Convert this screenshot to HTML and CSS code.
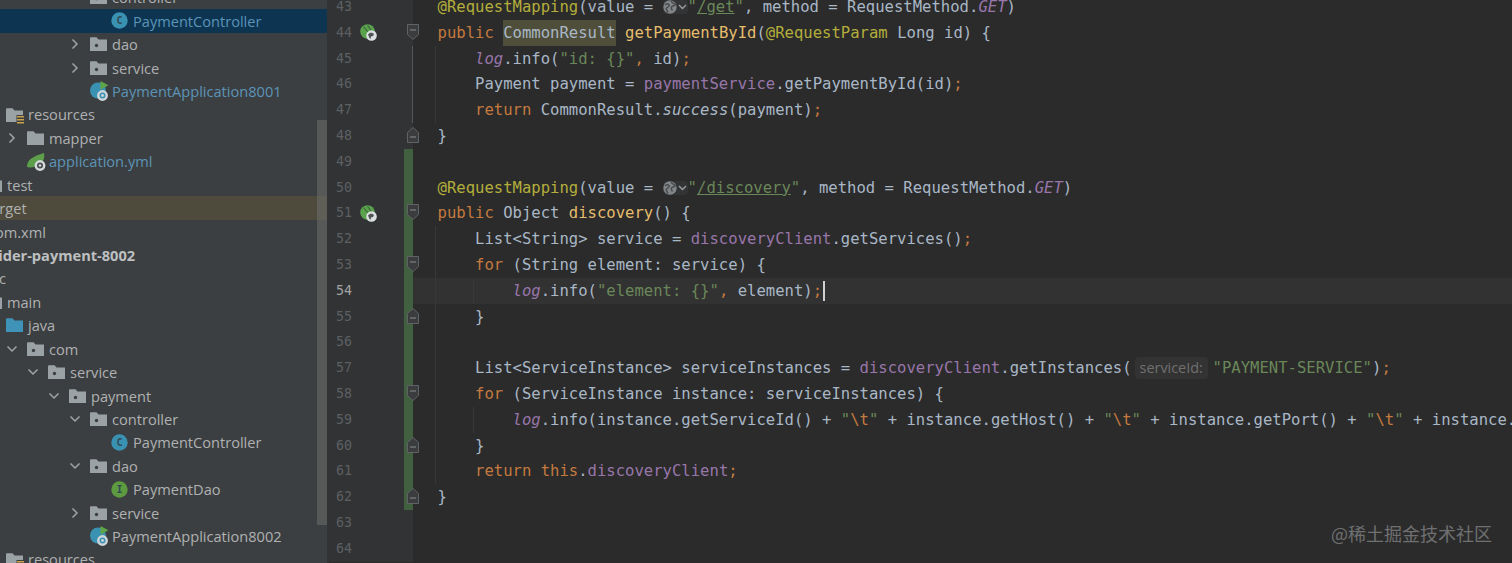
FILE: index.html
```html
<!DOCTYPE html>
<html lang="en">
<head>
<meta charset="utf-8">
<title>PaymentController</title>
<link rel="stylesheet" href="styles.css">
</head>
<body>
<svg class="defs" width="0" height="0" aria-hidden="true">
  <symbol id="folder" viewBox="0 0 17 14"><path d="M0 1.5C0 .7.5.3 1 .3h5.5L8.5 2.5H17V14H0z" fill="#9aa2a6"/></symbol>
  <symbol id="pkg" viewBox="0 0 17 14"><path d="M0 1.5C0 .7.5.3 1 .3h5.5L8.5 2.5H17V14H0z" fill="#9aa2a6"/><circle cx="6.5" cy="8.5" r="1.7" fill="#3c3f41"/></symbol>
  <symbol id="blue" viewBox="0 0 17 14"><path d="M0 1.5C0 .7.5.3 1 .3h5.5L8.5 2.5H17V14H0z" fill="#3f93b8"/></symbol>
  <symbol id="res" viewBox="0 0 19 16"><path d="M0 1.5C0 .7.5.3 1 .3h5.5L8.5 2.5H17V14H0z" fill="#9aa2a6"/><rect x="10.5" y="7" width="8" height="9" fill="#3c3f41"/><path d="M11 8h7v1.6h-7zM11 11h7v1.6h-7zM11 14h7v1.6h-7z" fill="#c9a24a"/></symbol>
  <symbol id="cls" viewBox="0 0 17 17"><circle cx="8.5" cy="8.5" r="8.2" fill="#3a92b3"/><text x="8.5" y="12.2" text-anchor="middle" class="glyph">C</text></symbol>
  <symbol id="ifc" viewBox="0 0 17 17"><circle cx="8.5" cy="8.5" r="8.2" fill="#5e9a3f"/><text x="8.5" y="12.2" text-anchor="middle" class="glyph">I</text></symbol>
  <symbol id="app" viewBox="0 0 19 20"><circle cx="8" cy="9.5" r="8" fill="#3a92b3"/><path d="M10.5 0v8.5l8-4.2z" fill="#5ea548"/><circle cx="12.5" cy="14.5" r="5.4" fill="#cfd6da"/><circle cx="12.5" cy="14.5" r="3" fill="#3a92b3"/><circle cx="12.5" cy="14.5" r="1.4" fill="#cfd6da"/></symbol>
  <symbol id="leaf" viewBox="0 0 20 18"><path d="M0 14C0 6 7 3 17 0c1 6-1 9-4 11-4 3-9 4-13 3z" fill="#5c9e4a"/><circle cx="13" cy="12.5" r="5.4" fill="#d5dadd"/><circle cx="13" cy="12.5" r="3" fill="#4a4d4f"/><circle cx="13" cy="12.5" r="1.3" fill="#d5dadd"/></symbol>
  <symbol id="bean" viewBox="0 0 17 17"><circle cx="7.500" cy="7.500" r="7.300" fill="#5aa24e"/><path d="M3.500 2.500l4.500 5.500M7.500 1.500l4 5" stroke="#3a5f38" stroke-width="1.100"/><circle cx="11.500" cy="11.500" r="5.300" fill="#dcdfe0"/><path d="M8 10.500c1.500-2 3-2 4.500-1.500l1.500 1-1 2-2 .5-.5 2.500-1-1z" fill="#4f5355"/></symbol>
  <symbol id="globe" viewBox="0 0 25 14"><circle cx="7" cy="7" r="6.700" fill="#838688"/><path d="M2 5c1.500-1.500 3-1.500 4-.5S5 7 3.500 8s1 2 1.500 4.500M8 1c1 2 2.500 2 4.500 3.500-1 1.500-3 1-4 2.500s.5 2.500 1 3.500" stroke="#4a4c4e" stroke-width="1.500" fill="none"/><path d="M16 5l3.500 3.500L23 5" stroke="#9a9d9f" stroke-width="1.400" fill="none"/></symbol>
  <symbol id="right" viewBox="0 0 12 12"><path d="M3.500 1.500L8 6l-4.500 4.500" stroke="#a0a4a7" stroke-width="1.500" fill="none"/></symbol>
  <symbol id="down" viewBox="0 0 12 12"><path d="M1.500 3.500L6 8l4.500-4.500" stroke="#a0a4a7" stroke-width="1.500" fill="none"/></symbol>
  <symbol id="fold-open" viewBox="0 0 12 16"><path d="M.5.500h11v10l-5.500 5-5.500-5z" fill="#3a3c3d" stroke="#606366"/><path d="M3 6h6" stroke="#8a8d8f"/></symbol>
  <symbol id="fold-close" viewBox="0 0 12 16"><path d="M.5 15.500h11v-10l-5.500-5-5.500 5z" fill="#3a3c3d" stroke="#606366"/><path d="M3 10h6" stroke="#8a8d8f"/></symbol>
</svg>

<main class="ide">
  <aside class="project">
    <div class="tree">
      <div class="row l7"><svg class="chev"><use href="#down"/></svg><svg class="ico pk"><use href="#pkg"/></svg><span>controller</span></div>
      <div class="row l8 selected"><span class="chev"></span><svg class="ico round"><use href="#cls"/></svg><span class="vcs">PaymentController</span></div>
      <div class="row l7"><svg class="chev"><use href="#right"/></svg><svg class="ico pk"><use href="#pkg"/></svg><span>dao</span></div>
      <div class="row l7"><svg class="chev"><use href="#right"/></svg><svg class="ico pk"><use href="#pkg"/></svg><span>service</span></div>
      <div class="row l7"><span class="chev"></span><svg class="ico appi"><use href="#app"/></svg><span class="vcs">PaymentApplication8001</span></div>
      <div class="row l3"><span class="chev"></span><svg class="ico resi"><use href="#res"/></svg><span>resources</span></div>
      <div class="row l4"><svg class="chev"><use href="#right"/></svg><svg class="ico pk"><use href="#folder"/></svg><span>mapper</span></div>
      <div class="row l4"><span class="chev"></span><svg class="ico leafi"><use href="#leaf"/></svg><span class="vcs">application.yml</span></div>
      <div class="row l2"><span class="chev"></span><svg class="ico pk"><use href="#folder"/></svg><span>test</span></div>
      <div class="row l1 excluded"><span class="chev"></span><svg class="ico pk"><use href="#folder"/></svg><span>target</span></div>
      <div class="row l1"><span class="chev"></span><span class="ico"></span><span>pom.xml</span></div>
      <div class="row l0 module"><span class="chev"></span><span class="ico"></span><span>provider-payment-8002</span></div>
      <div class="row l1"><span class="chev"></span><span class="ico"></span><span>src</span></div>
      <div class="row l2"><span class="chev"></span><svg class="ico pk"><use href="#folder"/></svg><span>main</span></div>
      <div class="row l3"><span class="chev"></span><svg class="ico pk"><use href="#blue"/></svg><span>java</span></div>
      <div class="row l4"><svg class="chev"><use href="#down"/></svg><svg class="ico pk"><use href="#pkg"/></svg><span>com</span></div>
      <div class="row l5"><svg class="chev"><use href="#down"/></svg><svg class="ico pk"><use href="#pkg"/></svg><span>service</span></div>
      <div class="row l6"><svg class="chev"><use href="#down"/></svg><svg class="ico pk"><use href="#pkg"/></svg><span>payment</span></div>
      <div class="row l7"><svg class="chev"><use href="#down"/></svg><svg class="ico pk"><use href="#pkg"/></svg><span>controller</span></div>
      <div class="row l8"><span class="chev"></span><svg class="ico round"><use href="#cls"/></svg><span>PaymentController</span></div>
      <div class="row l7"><svg class="chev"><use href="#down"/></svg><svg class="ico pk"><use href="#pkg"/></svg><span>dao</span></div>
      <div class="row l8"><span class="chev"></span><svg class="ico round"><use href="#ifc"/></svg><span>PaymentDao</span></div>
      <div class="row l7"><svg class="chev"><use href="#right"/></svg><svg class="ico pk"><use href="#pkg"/></svg><span>service</span></div>
      <div class="row l7"><span class="chev"></span><svg class="ico appi"><use href="#app"/></svg><span>PaymentApplication8002</span></div>
      <div class="row l3"><span class="chev"></span><svg class="ico resi"><use href="#res"/></svg><span>resources</span></div>
    </div>
    <div class="scrollbar"></div>
  </aside>

  <section class="editor">
    <div class="line"><div class="gutter"><span class="num">43</span><span class="mark"></span><span class="fold"></span></div><code class="code"><i class="an">@RequestMapping</i>(value = <svg class="globe"><use href="#globe"/></svg><i class="st">"<u>/get</u>"</i>, method = RequestMethod.<em class="fd">GET</em>)</code></div>
    <div class="line"><div class="gutter"><span class="num">44</span><span class="mark"><svg class="bean"><use href="#bean"/></svg></span><span class="fold"><svg class="fm"><use href="#fold-open"/></svg></span></div><code class="code"><i class="kw">public</i> <b class="hl">CommonResult</b> <i class="me">getPaymentById</i>(<i class="an">@RequestParam</i> Long id) {</code></div>
    <div class="line"><div class="gutter"><span class="num">45</span><span class="mark"></span><span class="fold span"></span></div><code class="code g1">    <em class="fd">log</em>.info(<i class="st">"id: {}"</i><i class="kw">,</i> id)<i class="kw">;</i></code></div>
    <div class="line"><div class="gutter"><span class="num">46</span><span class="mark"></span><span class="fold span"></span></div><code class="code g1">    Payment payment = <i class="fd">paymentService</i>.getPaymentById(id)<i class="kw">;</i></code></div>
    <div class="line"><div class="gutter"><span class="num">47</span><span class="mark"></span><span class="fold span"></span></div><code class="code g1">    <i class="kw">return</i> CommonResult.<em>success</em>(payment)<i class="kw">;</i></code></div>
    <div class="line"><div class="gutter"><span class="num">48</span><span class="mark"></span><span class="fold"><svg class="fm"><use href="#fold-close"/></svg></span></div><code class="code">}</code></div>
    <div class="line"><div class="gutter"><span class="num">49</span><span class="mark"></span><span class="fold changed"></span></div><code class="code"></code></div>
    <div class="line"><div class="gutter"><span class="num">50</span><span class="mark"></span><span class="fold changed"></span></div><code class="code"><i class="an">@RequestMapping</i>(value = <svg class="globe"><use href="#globe"/></svg><i class="st">"<u>/discovery</u>"</i>, method = RequestMethod.<em class="fd">GET</em>)</code></div>
    <div class="line"><div class="gutter"><span class="num">51</span><span class="mark"><svg class="bean"><use href="#bean"/></svg></span><span class="fold changed"><svg class="fm"><use href="#fold-open"/></svg></span></div><code class="code"><i class="kw">public</i> Object <i class="me">discovery</i>() {</code></div>
    <div class="line"><div class="gutter"><span class="num">52</span><span class="mark"></span><span class="fold changed"></span></div><code class="code g1">    List&lt;String&gt; service = <i class="fd">discoveryClient</i>.getServices()<i class="kw">;</i></code></div>
    <div class="line"><div class="gutter"><span class="num">53</span><span class="mark"></span><span class="fold changed"><svg class="fm"><use href="#fold-open"/></svg></span></div><code class="code g1">    <i class="kw">for</i> (String element: service) {</code></div>
    <div class="line current"><div class="gutter"><span class="num">54</span><span class="mark"></span><span class="fold changed"></span></div><code class="code g2">        <em class="fd">log</em>.info(<i class="st">"element: {}"</i><i class="kw">,</i> element)<i class="kw">;</i><span class="caret"></span></code></div>
    <div class="line"><div class="gutter"><span class="num">55</span><span class="mark"></span><span class="fold changed"><svg class="fm"><use href="#fold-close"/></svg></span></div><code class="code g1">    }</code></div>
    <div class="line"><div class="gutter"><span class="num">56</span><span class="mark"></span><span class="fold changed"></span></div><code class="code g1"></code></div>
    <div class="line"><div class="gutter"><span class="num">57</span><span class="mark"></span><span class="fold changed"></span></div><code class="code g1">    List&lt;ServiceInstance&gt; serviceInstances = <i class="fd">discoveryClient</i>.getInstances(<span class="hint">serviceId:</span><i class="st">"PAYMENT-SERVICE"</i>)<i class="kw">;</i></code></div>
    <div class="line"><div class="gutter"><span class="num">58</span><span class="mark"></span><span class="fold changed"><svg class="fm"><use href="#fold-open"/></svg></span></div><code class="code g1">    <i class="kw">for</i> (ServiceInstance instance: serviceInstances) {</code></div>
    <div class="line"><div class="gutter"><span class="num">59</span><span class="mark"></span><span class="fold changed"></span></div><code class="code g2">        <em class="fd">log</em>.info(instance.getServiceId() + <i class="st">"<i class="kw">\t</i>"</i> + instance.getHost() + <i class="st">"<i class="kw">\t</i>"</i> + instance.getPort() + <i class="st">"<i class="kw">\t</i>"</i> + instance.getUri())<i class="kw">;</i></code></div>
    <div class="line"><div class="gutter"><span class="num">60</span><span class="mark"></span><span class="fold changed"><svg class="fm"><use href="#fold-close"/></svg></span></div><code class="code g1">    }</code></div>
    <div class="line"><div class="gutter"><span class="num">61</span><span class="mark"></span><span class="fold changed"></span></div><code class="code g1">    <i class="kw">return this</i>.<i class="fd">discoveryClient</i><i class="kw">;</i></code></div>
    <div class="line"><div class="gutter"><span class="num">62</span><span class="mark"></span><span class="fold changed"><svg class="fm"><use href="#fold-close"/></svg></span></div><code class="code">}</code></div>
    <div class="line"><div class="gutter"><span class="num">63</span><span class="mark"></span><span class="fold"></span></div><code class="code"></code></div>
    <div class="line"><div class="gutter"><span class="num">64</span><span class="mark"></span><span class="fold"></span></div><code class="code"></code></div>
  </section>
</main>
<div class="watermark">@稀土掘金技术社区</div>
</body>
</html>
```
FILE: styles.css
```css
* { box-sizing: border-box; }
html, body { margin: 0; height: 100%; overflow: hidden; background: #2b2b2b; }
.defs { position: absolute; }
.glyph { font: 700 10px "DejaVu Sans Mono", monospace; fill: #2f4a55; }

.ide { display: flex; height: 563px; overflow: hidden; }

/* Project tree */
.project {
  position: relative;
  flex: 0 0 329px;
  background: #3c3f41;
  border-right: 2px solid #323334;
  overflow: hidden;
}
.tree { margin: -14.35px 0 0 -78px; width: 405px; }
.row {
  display: flex;
  align-items: center;
  height: 23.43px;
  font: 14.6px "Open Sans", "Noto Sans", sans-serif;
  color: #afb1b2;
  white-space: nowrap;
}
.l0 { padding-left: 0; }
.l1 { padding-left: 21px; }
.l2 { padding-left: 42px; }
.l3 { padding-left: 63px; }
.l4 { padding-left: 84px; }
.l5 { padding-left: 105px; }
.l6 { padding-left: 126px; }
.l7 { padding-left: 147px; }
.l8 { padding-left: 168px; }
.chev { flex: 0 0 12px; width: 12px; height: 12px; margin-right: 9px; }
.ico { flex: 0 0 17px; width: 17px; height: 14px; margin-right: 5px; }
.ico.round { height: 17px; }
.ico.appi { width: 19px; height: 20px; flex-basis: 19px; margin-right: 3px; }
.ico.resi { width: 19px; height: 16px; flex-basis: 19px; margin-right: 3px; margin-top: 3px; }
.ico.leafi { width: 20px; height: 18px; flex-basis: 20px; margin-right: 2px; margin-top: 2px; }
.selected { background: #0d3552; }
.vcs { color: #5b94b8; }
.excluded { background: #4e4a3c; }
.module { font-weight: 700; color: #bdbfc0; }
.scrollbar {
  position: absolute;
  top: 120px;
  left: 317px;
  width: 10px;
  height: 405px;
  background: rgba(120, 122, 120, 0.45);
}

/* Editor */
.editor { flex: 1; min-width: 0; margin-top: -6px; overflow: hidden; }
.line { display: flex; height: 25.8px; }
.gutter { flex: 0 0 84px; display: flex; background: #313335; }
.num {
  flex: 0 0 23px;
  text-align: right;
  font: 13.3px/25.8px "DejaVu Sans Mono", monospace;
  color: #5d6062;
}
.current .num { color: #a4a3a3; }
.mark { flex: 0 0 32px; display: flex; align-items: center; justify-content: center; }
.bean { width: 17px; height: 17px; }
.fold { position: relative; flex: 1; }
.fold.span { box-shadow: inset -1px 0 #55585a; }
.fold.changed { background: linear-gradient(90deg, #313335 20px, #40603f 20px); }
.fm { position: absolute; right: -6px; top: 4px; width: 12px; height: 16px; z-index: 1; }
.code {
  flex: 1;
  min-width: 0;
  overflow: hidden;
  padding: 1px 0 0 24.5px;
  font: 15.585px/25.8px "DejaVu Sans Mono", monospace;
  color: #a9b7c6;
  white-space: pre;
}
.code i, .code b { font-style: normal; font-weight: 400; }
.code em { font-style: italic; }
.g1 { background: linear-gradient(90deg, transparent 22px, #383838 22px, #383838 23px, transparent 23px) no-repeat; }
.g2 { background: linear-gradient(90deg, transparent 22px, #383838 22px, #383838 23px, transparent 23px, transparent 60px, #383838 60px, #383838 61px, transparent 61px) no-repeat; }
.current .code { background-color: #323232; }
.an { color: #b3ae3c; }
.kw { color: #c47a3f; }
.st { color: #6a8759; }
.me { color: #e6bd6d; }
.fd { color: #9876aa; }
.hl { background: #4f4e3a; padding: 4px 0; }
.st u { text-decoration: underline; }
.globe { width: 25px; height: 14px; vertical-align: -2px; background: #333435; border-radius: 4px; }
.hint {
  display: inline-block;
  width: 73px;
  margin: 0 5px 0 3px;
  padding-left: 5px;
  font: 14.4px/22px "Open Sans", sans-serif;
  color: #707070;
  background: #333333;
  border-radius: 4px;
}
.caret {
  display: inline-block;
  width: 2px;
  height: 20px;
  margin-left: 1px;
  vertical-align: -5px;
  background: #d0d0d0;
}
.watermark {
  position: absolute;
  right: 20px;
  top: 520px;
  font: 18px/26px "Noto Sans CJK SC", "Noto Sans", sans-serif;
  color: #6f7071;
  white-space: nowrap;
}
```
